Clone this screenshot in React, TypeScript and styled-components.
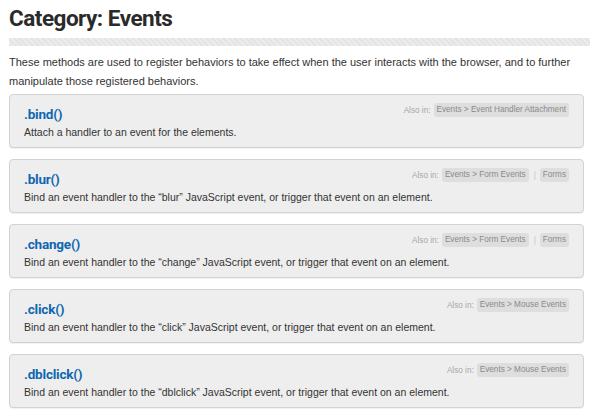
import styled, { createGlobalStyle } from 'styled-components';

type Entry = {
  name: string;
  desc: string;
  also: string[];
};

const entries: Entry[] = [
  { name: '.bind()', desc: 'Attach a handler to an event for the elements.', also: ['Events > Event Handler Attachment'] },
  {
    name: '.blur()',
    desc: 'Bind an event handler to the \u201cblur\u201d JavaScript event, or trigger that event on an element.',
    also: ['Events > Form Events', 'Forms'],
  },
  {
    name: '.change()',
    desc: 'Bind an event handler to the \u201cchange\u201d JavaScript event, or trigger that event on an element.',
    also: ['Events > Form Events', 'Forms'],
  },
  {
    name: '.click()',
    desc: 'Bind an event handler to the \u201cclick\u201d JavaScript event, or trigger that event on an element.',
    also: ['Events > Mouse Events'],
  },
  {
    name: '.dblclick()',
    desc: 'Bind an event handler to the \u201cdblclick\u201d JavaScript event, or trigger that event on an element.',
    also: ['Events > Mouse Events'],
  },
];

function App() {
  return (
    <>
      <GlobalStyle />
      <Page>
        <Title>Category: Events</Title>
        <Rule />
        <Intro>
          These methods are used to register behaviors to take effect when the user interacts with the browser, and to
          further manipulate those registered behaviors.
        </Intro>
        <List>
          {entries.map((entry) => (
            <Card key={entry.name}>
              <CardHead>
                <Name>{entry.name}</Name>
                <AlsoIn>
                  Also in:
                  {entry.also.map((tag, i) => (
                    <span key={tag}>
                      {i > 0 && <Sep>|</Sep>}
                      <Tag>{tag}</Tag>
                    </span>
                  ))}
                </AlsoIn>
              </CardHead>
              <Desc>{entry.desc}</Desc>
            </Card>
          ))}
        </List>
      </Page>
    </>
  );
}

export default App;

const GlobalStyle = createGlobalStyle`
  html, body {
    margin: 0;
    background: #ffffff;
    overflow: hidden;
  }
`;

const Page = styled.div`
  width: 590px;
  height: 412px;
  padding: 0 0 0 9px;
  box-sizing: border-box;
  font-family: 'Liberation Sans', Arial, sans-serif;
  color: #333333;
`;

const Title = styled.h1`
  margin: 0;
  padding-top: 4px;
  font-family: Roboto, 'Liberation Sans', sans-serif;
  font-size: 22.5px;
  font-weight: 700;
  letter-spacing: -0.5px;
  line-height: 28px;
  color: #2a2a2a;
`;

const Rule = styled.div`
  margin-top: 6px;
  height: 8px;
  background: repeating-linear-gradient(45deg, #e4e4e4 0 2px, #ececec 2px 4px);
`;

const Intro = styled.p`
  margin: 7px 0 0;
  width: 575px;
  font-size: 11px;
  line-height: 19px;
  color: #333333;
`;

const List = styled.div`
  margin-top: 3px;
  display: flex;
  flex-direction: column;
  gap: 11px;
  width: 575px;
`;

const Card = styled.div`
  height: 54px;
  box-sizing: border-box;
  padding: 9px 14px 0 14px;
  background: #eeeeee;
  border: 1px solid #d2d2d2;
  border-radius: 4px;
  box-shadow: 0 1px 1px rgba(0, 0, 0, 0.06);
`;

const CardHead = styled.div`
  display: flex;
  justify-content: space-between;
  align-items: flex-start;
  height: 20px;
`;

const Name = styled.span`
  font-family: Roboto, 'Liberation Sans', sans-serif;
  font-size: 13.5px;
  font-weight: 700;
  letter-spacing: -0.2px;
  line-height: 20px;
  color: #0f67b0;
`;

const AlsoIn = styled.div`
  display: flex;
  align-items: center;
  gap: 3px;
  font-size: 8.2px;
  color: #a6a6a6;
  margin-top: -1px;
  span {
    display: flex;
    align-items: center;
  }
`;

const Tag = styled.span`
  background: #dedede;
  color: #8a8a8a;
  border-radius: 3px;
  padding: 0 3px;
  line-height: 14px;
`;

const Sep = styled.span`
  color: #c4c4c4;
  padding: 0 4px 0 2px;
`;

const Desc = styled.div`
  font-size: 10.5px;
  line-height: 16px;
  color: #333333;
`;
